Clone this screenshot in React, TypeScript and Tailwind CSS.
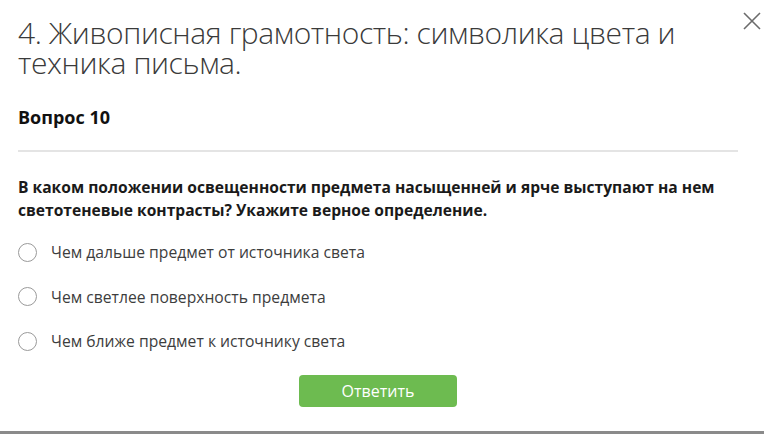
import React, { useState } from "react";

const options = [
  "Чем дальше предмет от источника света",
  "Чем светлее поверхность предмета",
  "Чем ближе предмет к источнику света",
];

export default function App() {
  const [selected, setSelected] = useState<number | null>(null);

  return (
    <div className="relative w-[764px] h-[434px] bg-white overflow-hidden font-['Open_Sans',sans-serif]">
      <button className="absolute right-[2px] top-[11px] w-[20px] h-[20px] flex items-center justify-center" title="Закрыть">
        <svg width="18" height="18" viewBox="0 0 18 18" fill="none" stroke="#6b6b6b" strokeWidth="1.6">
          <path d="M1 1L17 17M17 1L1 17" />
        </svg>
      </button>

      <div className="flex flex-col px-[18px] pt-[18px] h-[431px]">
        <h1 className="text-[30px] leading-[30px] font-light text-[#3a3a3a] pr-[60px] tracking-[-0.4px]">
          4. Живописная грамотность: символика цвета и техника письма.
        </h1>

        <p className="mt-[26px] text-[18px] leading-[27px] font-bold text-[#111]">Вопрос 10</p>

        <div className="mt-[19px] mr-[8px] h-[2px] bg-[#e4e4e4]" />

        <p className="mt-[24px] text-[15.6px] leading-[23px] font-bold text-[#1a1a1a] pr-[10px]">
          В каком положении освещенности предмета насыщенней и ярче выступают на нем светотеневые контрасты? Укажите верное определение.
        </p>

        <div className="mt-[19px] flex flex-col gap-[22.5px]">
          {options.map((option, i) => (
            <label key={i} className="flex items-center gap-[14px] cursor-pointer" onClick={() => setSelected(i)}>
              <span className="w-[19px] h-[19px] rounded-full border-[1.5px] border-[#9a9a9a] flex items-center justify-center">
                {selected === i && <span className="w-[9px] h-[9px] rounded-full bg-[#6cbb4f]" />}
              </span>
              <span className="text-[15.7px] leading-[22px] text-[#3d3d3d]">{option}</span>
            </label>
          ))}
        </div>

        <div className="mt-[23px] flex justify-center">
          <button className="w-[158px] h-[32px] rounded-[4px] bg-[#6dbb50] text-white text-[16px] ml-[-8px]">Ответить</button>
        </div>
      </div>

      <div className="h-[3px] bg-[#8a8a8a]" />
    </div>
  );
}
